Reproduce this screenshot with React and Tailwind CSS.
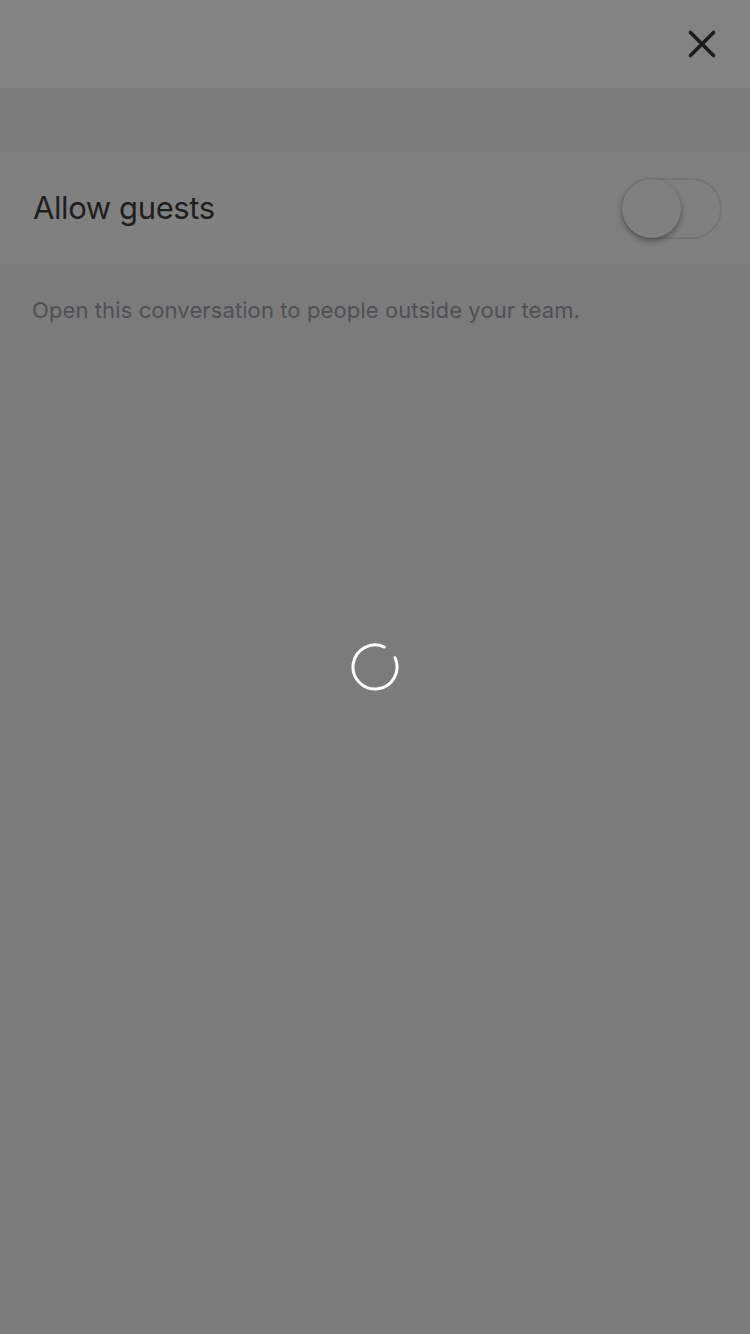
export default function App() {
  return (
    <div className="min-h-[1334px] w-[750px] bg-[#7b7b7b] flex flex-col" style={{ fontFamily: "Inter, 'Noto Sans', sans-serif" }}>
      <div className="h-[88px] bg-[#838383] flex items-center justify-end pr-[34px]">
        <svg width="28" height="28" viewBox="0 0 28 28">
          <path d="M2.5 2.5 L25.5 25.5 M25.5 2.5 L2.5 25.5" stroke="#1c1c1c" strokeWidth="3.6" strokeLinecap="round" />
        </svg>
      </div>
      <div className="h-[64px] bg-[#7b7b7b]" />
      <div className="h-[112px] bg-[#808080] flex items-center justify-between pl-[33px] pr-[28px]">
        <span className="text-[31px] text-[#1e1e1e] tracking-[-0.4px]">Allow guests</span>
        <div className="relative w-[101px] h-[61px] rounded-full border-2 border-[#747474]">
          <div className="absolute left-[-1px] top-[-1px] w-[59px] h-[59px] rounded-full bg-[#808080] shadow-[0_3px_6px_rgba(0,0,0,0.35)]" />
        </div>
      </div>
      <div className="pt-[30px] pl-[32px]">
        <p className="text-[22px] text-[#4e5054] tracking-[0.1px]">Open this conversation to people outside your team.</p>
      </div>
      <div className="flex justify-center mt-[315px]">
        <svg width="50" height="50" viewBox="0 0 50 50">
          <path d="M44.94 15.7 A22 22 0 1 1 34.3 5.06" fill="none" stroke="#ffffff" strokeWidth="3" strokeLinecap="round" />
        </svg>
      </div>
    </div>
  );
}
